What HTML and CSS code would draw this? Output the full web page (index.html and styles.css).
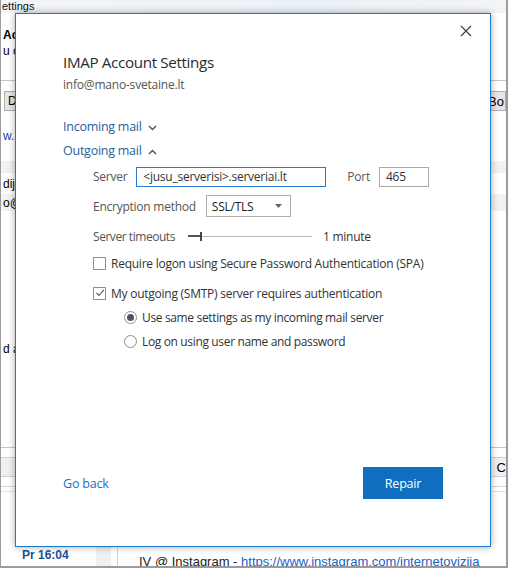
FILE: index.html
```html
<!DOCTYPE html>
<html>
<head>
<meta charset="utf-8">
<link rel="stylesheet" href="styles.css">
</head>
<body>
<div class="win">
  <div class="bg">
    <div class="titlebar"><span class="tb-text">ettings</span></div>
    <div class="bg-row r1"><span class="bold">Ac</span></div>
    <div class="bg-row r2"><span>u c</span></div>
    <div class="bg-line l1"></div>
    <div class="bg-row r3"><span class="btn-l">D</span><span class="btn-r">; Bo</span></div>
    <div class="bg-row r4"><span class="blue">w...</span></div>
    <div class="bg-row band b1"></div>
    <div class="bg-row r5"><span>diju</span></div>
    <div class="bg-row band b2"><span>o@</span></div>
    <div class="bg-row r6"><span>d a</span></div>
    <div class="bg-line l2"></div>
    <div class="bg-row r7"><span class="btn-r2">C</span></div>
    <div class="bg-line l3"></div>
    <div class="bg-bottom">
      <div class="col-a"><span class="time">Pr 16:04</span></div>
      <div class="col-b"></div>
      <div class="col-c">
        <div class="dash">--</div>
        <div class="insta">IV @ Instagram - <span class="link">https://www.instagram.com/internetovizija</span></div>
      </div>
    </div>
  </div>

  <div class="dialog">
    <button class="close" aria-label="Close">
      <svg width="12" height="12" viewBox="0 0 12 12"><path d="M1 1 L11 11 M11 1 L1 11" stroke="#3a3a3a" stroke-width="1.1" fill="none"/></svg>
    </button>
    <div class="content">
      <h1 class="title">IMAP Account Settings</h1>
      <div class="email">info@mano-svetaine.lt</div>

      <div class="section incoming">Incoming mail
        <svg class="chev" width="9" height="6" viewBox="0 0 9 6"><path d="M1 1 L4.5 4.5 L8 1" stroke="#555" stroke-width="1.5" fill="none"/></svg>
      </div>
      <div class="section outgoing">Outgoing mail
        <svg class="chev" width="9" height="6" viewBox="0 0 9 6"><path d="M1 5 L4.5 1.5 L8 5" stroke="#555" stroke-width="1.5" fill="none"/></svg>
      </div>

      <div class="settings">
        <div class="row server-row">
          <span class="lbl">Server</span>
          <div class="input server">&lt;jusu_serverisi&gt;.serveriai.lt</div>
          <span class="lbl port-lbl">Port</span>
          <div class="input port">465</div>
        </div>
        <div class="row enc-row">
          <span class="lbl">Encryption method</span>
          <div class="select">SSL/TLS
            <svg class="arrow" width="7" height="4" viewBox="0 0 7 4"><path d="M0 0 L7 0 L3.5 4 Z" fill="#666"/></svg>
          </div>
        </div>
        <div class="row timeout-row">
          <span class="lbl">Server timeouts</span>
          <div class="slider">
            <div class="fill"></div>
            <div class="thumb"></div>
            <div class="track"></div>
          </div>
          <span class="val">1 minute</span>
        </div>
        <div class="row check-row spa">
          <span class="checkbox"></span>
          <span class="opt">Require logon using Secure Password Authentication (SPA)</span>
        </div>
        <div class="row check-row smtp">
          <span class="checkbox checked">
            <svg width="10" height="10" viewBox="0 0 10 10"><path d="M1.5 5 L4 7.5 L8.8 1.8" stroke="#555" stroke-width="1.1" fill="none"/></svg>
          </span>
          <span class="opt">My outgoing (SMTP) server requires authentication</span>
        </div>
        <div class="row radio-row r-first">
          <span class="radio checked"></span>
          <span class="opt">Use same settings as my incoming mail server</span>
        </div>
        <div class="row radio-row r-second">
          <span class="radio"></span>
          <span class="opt">Log on using user name and password</span>
        </div>
      </div>
    </div>
    <div class="footer">
      <a class="goback">Go back</a>
      <button class="repair">Repair</button>
    </div>
  </div>
</div>
</body>
</html>
```
FILE: styles.css
```css
* { box-sizing: border-box; }
html, body { margin: 0; padding: 0; }
body {
  width: 508px;
  height: 568px;
  overflow: hidden;
  font-family: "Open Sans", "Noto Sans", sans-serif;
  background: #ffffff;
}
.win {
  position: relative;
  width: 508px;
  height: 568px;
  border-left: 1px solid #9c9a9c;
  border-right: 2px solid #9c9a9c;
  border-bottom: 2px solid #9c9a9c;
  overflow: hidden;
}
/* background outlook window */
.bg {
  display: flex;
  flex-direction: column;
  height: 100%;
  font-family: "Liberation Sans", sans-serif;
  font-size: 12px;
  color: #000;
}
.titlebar {
  height: 13px;
  background: linear-gradient(90deg, #f2f4f7 0%, #eef3f8 40%, #e9f1f8 60%, #f3f4f6 100%);
  padding-left: 1px;
  display: flex;
  align-items: flex-start;
}
.tb-text {
  display: block;
  font-size: 11px;
  line-height: 13px;
  color: #111;
}
.bg-row {
  display: flex;
  align-items: center;
  padding-left: 2px;
  flex-shrink: 0;
  color: #000;
}
.r1 { height: 17px; margin-top: 13px; }
.bold { font-weight: bold; font-size: 12px; }
.r2 { height: 16px; }
.bg-line { flex-shrink: 0; height: 1px; background: #c6c6c6; }
.l1 { margin-top: 21px; }
.r3 {
  height: 22px;
  margin-top: 9px;
  justify-content: space-between;
  padding-left: 3px;
  padding-right: 0;
}
.btn-l {
  border: 1px solid #adadad;
  background: #e6e6e6;
  padding: 1px 3px;
  height: 20px;
  line-height: 17px;
}
.btn-r {
  border: 1px solid #adadad;
  background: #e6e6e6;
  padding: 1px 1px 1px 5px;
  height: 20px;
  line-height: 17px;
  font-size: 13px;
}
.r4 { height: 14px; margin-top: 17px; }
.blue { color: #1a3f8f; }
.band { background: #f2f2f2; height: 12px; }
.b1 { margin-top: 18px; }
.r5 { height: 16px; margin-top: 3px; }
.b2 { height: 17px; margin-top: 2px; }
.r6 { height: 16px; margin-top: 130px; }
.l2 { margin-top: 90px; }
.r7 {
  height: 20px;
  margin-top: 9px;
  justify-content: flex-end;
  background: #f0f0f0;
  border-top: 1px solid #d0d0d0;
  border-bottom: 1px solid #d0d0d0;
}
.btn-r2 { padding-right: 0; font-size: 13px; }
.l3 { margin-top: 9px; background: #d6d6d6; }
.bg-bottom {
  flex: 1;
  display: flex;
  border-top: 1px solid #e2e2e2;
  margin-top: 4px;
}
.col-a {
  width: 95px;
  display: flex;
  align-items: flex-end;
  padding: 0 0 6px 21px;
}
.time { color: #1e4f94; font-weight: bold; font-size: 12px; }
.col-b { width: 15px; background: #f0f0f0; }
.col-c {
  flex: 1;
  margin-left: 6px;
  border-left: 1px solid #d4d4d4;
  padding: 43px 0 0 21px;
  font-size: 13px;
  color: #222;
  white-space: nowrap;
}
.dash { line-height: 12px; }
.insta { line-height: 13px; margin-top: 8px; }
.link { color: #1a5fc8; text-decoration: underline; }

/* dialog */
.dialog {
  position: absolute;
  left: 14px;
  top: 13px;
  width: 476px;
  height: 534px;
  background: #fff;
  border: 1px solid #1c79c9;
  box-shadow: 0 0 7px rgba(0, 0, 0, 0.35);
  display: flex;
  flex-direction: column;
  color: #333;
}
.close {
  position: absolute;
  top: 10px;
  right: 17px;
  width: 14px;
  height: 14px;
  padding: 1px;
  border: 0;
  background: transparent;
  display: flex;
  align-items: center;
  justify-content: center;
}
.content {
  flex: 1;
  padding: 37px 0 0 47px;
}
.title {
  margin: 0;
  font-size: 15.2px;
  font-weight: normal;
  line-height: 23px;
  color: #2b2b2b;
  letter-spacing: -0.35px;
}
.email {
  margin-top: 2px;
  font-size: 12px;
  line-height: 18px;
  color: #555;
  letter-spacing: -0.2px;
}
.section {
  display: flex;
  align-items: center;
  font-size: 12.5px;
  line-height: 18px;
  color: #27609e;
  letter-spacing: -0.25px;
}
.chev { margin-left: 6px; margin-top: 1px; }
.incoming { margin-top: 24px; }
.outgoing { margin-top: 6px; }
.settings {
  padding-left: 30px;
  font-size: 12px;
  letter-spacing: -0.25px;
}
.row { display: flex; align-items: center; }
.lbl { color: #555; }
.server-row { margin-top: 6px; height: 21px; }
.input {
  height: 20px;
  border: 1px solid #a9a9a9;
  padding: 0 6px;
  line-height: 18px;
  color: #333;
  font-size: 12px;
}
.server {
  margin-left: 9px;
  width: 190px;
  border-color: #2a7cd3;
}
.port-lbl { margin-left: 21px; }
.port { margin-left: 9px; width: 50px; }
.enc-row { margin-top: 8px; height: 22px; }
.select {
  margin-left: 10px;
  width: 85px;
  height: 22px;
  border: 1px solid #adadad;
  display: flex;
  align-items: center;
  justify-content: space-between;
  padding: 0 8px 0 5px;
  color: #222;
}
.timeout-row { margin-top: 10px; height: 18px; }
.timeout-row .lbl { letter-spacing: -0.45px; }
.slider {
  position: relative;
  margin-left: 13px;
  width: 124px;
  height: 12px;
  display: flex;
  align-items: center;
}
.fill { width: 12px; height: 2px; background: #555; }
.thumb { width: 2px; height: 9px; background: #444; }
.track { flex: 1; height: 1px; background: #b8b8b8; }
.val { margin-left: 11px; color: #333; }
.check-row { height: 18px; }
.spa { margin-top: 9px; }
.smtp { margin-top: 12px; }
.checkbox {
  width: 13px;
  height: 13px;
  border: 1px solid #8f8f8f;
  display: flex;
  align-items: center;
  justify-content: center;
  flex-shrink: 0;
}
.opt { margin-left: 5px; color: #333; }
.radio-row { height: 18px; margin-left: 31px; }
.r-first { margin-top: 6px; }
.r-second { margin-top: 6px; }
.radio-row .opt { letter-spacing: -0.35px; }
.radio {
  width: 13px;
  height: 13px;
  border: 1px solid #8f8f8f;
  border-radius: 50%;
  display: flex;
  align-items: center;
  justify-content: center;
  flex-shrink: 0;
}
.radio.checked::after {
  content: "";
  width: 7px;
  height: 7px;
  border-radius: 50%;
  background: #555;
}
.footer {
  display: flex;
  align-items: center;
  justify-content: space-between;
  padding: 0 47px 47px 47px;
}
.goback {
  color: #1a73c6;
  font-size: 12.5px;
  cursor: pointer;
  letter-spacing: -0.2px;
}
.repair {
  width: 80px;
  height: 32px;
  background: #0f6ebf;
  color: #fff;
  border: 0;
  font-family: "Open Sans", "Noto Sans", sans-serif;
  font-size: 12.5px;
  letter-spacing: -0.2px;
}
```
